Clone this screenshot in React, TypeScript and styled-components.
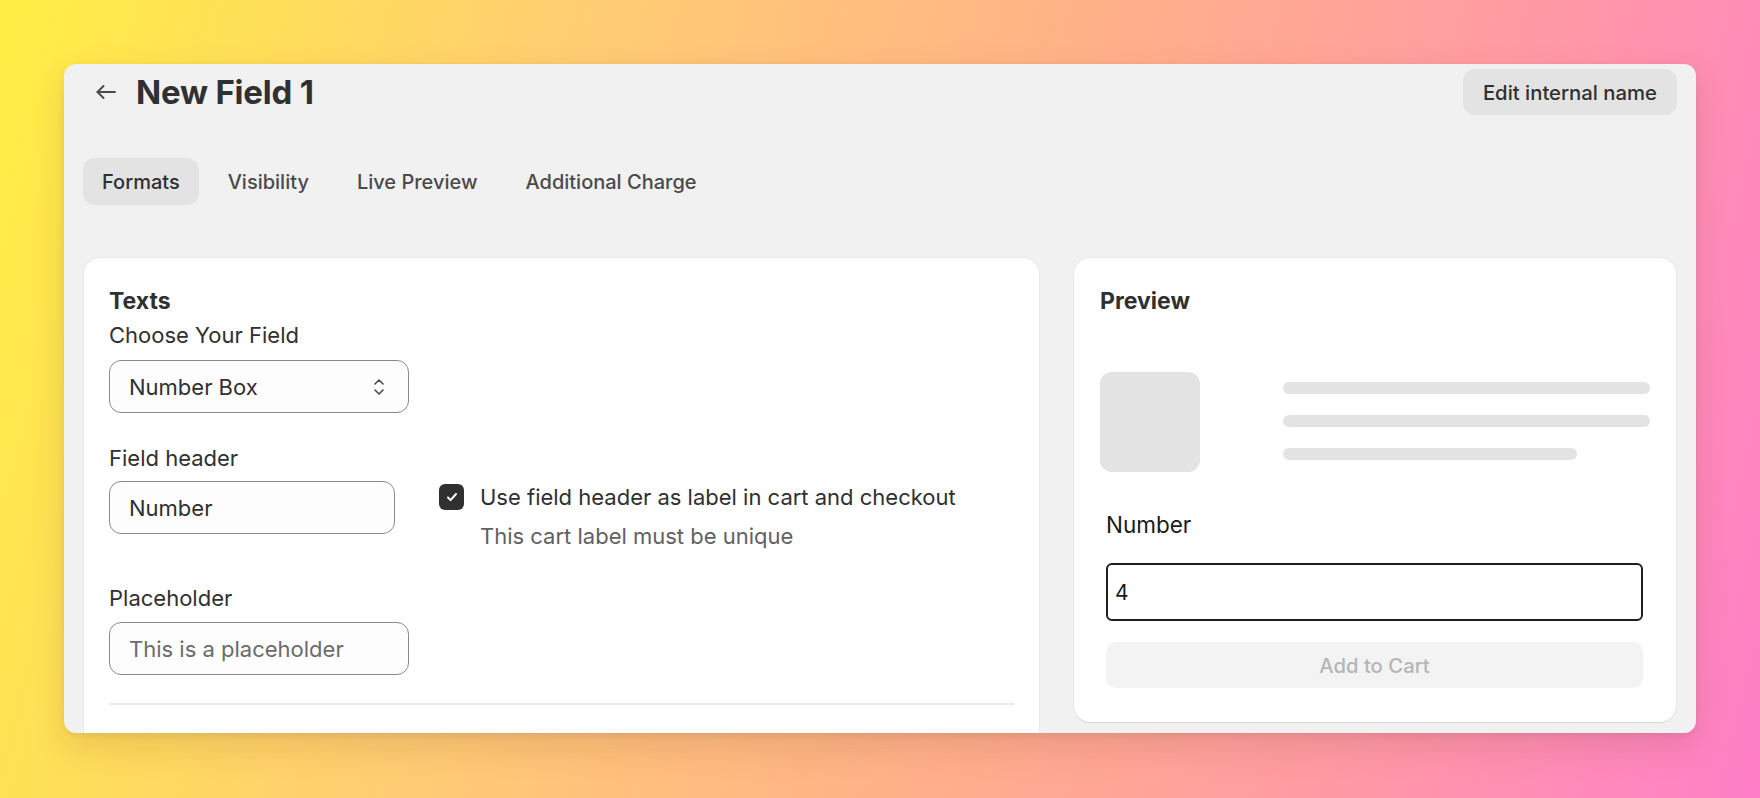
import React from 'react'
import styled, { createGlobalStyle } from 'styled-components'

const GlobalStyle = createGlobalStyle`
  * { box-sizing: border-box; }
  html, body {
    margin: 0;
    padding: 0;
  }
  body {
    font-family: Inter, "Noto Sans", "Liberation Sans", sans-serif;
    color: #303030;
    -webkit-font-smoothing: antialiased;
  }
`

const Backdrop = styled.div`
  width: 1760px;
  height: 798px;
  overflow: hidden;
  padding: 64px 0 0 64px;
  background: linear-gradient(105deg, #ffee44 0%, #ffcd72 30%, #ffb287 55%, #ff9aa4 78%, #ff7fc8 100%);
`

const Window = styled.div`
  width: 1632px;
  height: 669px;
  overflow: hidden;
  border-radius: 12px;
  background: #f1f1f1;
  padding: 5px 19px 0 20px;
  box-shadow: 0 14px 34px rgba(120, 60, 40, 0.16), 0 2px 6px rgba(0, 0, 0, 0.06);
`

const Header = styled.div`
  display: flex;
  align-items: center;
  justify-content: space-between;
  height: 46px;
`

const TitleGroup = styled.div`
  display: flex;
  align-items: center;
  gap: 18px;
  padding-left: 10px;
`

const BackButton = styled.button`
  display: flex;
  align-items: center;
  justify-content: center;
  width: 24px;
  height: 24px;
  padding: 0;
  border: 0;
  background: none;
  color: #4a4a4a;
`

const Title = styled.h1`
  margin: 0;
  font-size: 33px;
  line-height: 40px;
  font-weight: 700;
  letter-spacing: -0.2px;
  color: #303030;
`

const GhostButton = styled.button`
  height: 46px;
  padding: 0 20px;
  border: 0;
  border-radius: 12px;
  background: #e3e3e3;
  font-family: inherit;
  font-size: 20.3px;
  font-weight: 500;
  color: #303030;
`

const Tabs = styled.div`
  display: flex;
  gap: 10px;
  margin-top: 43px;
  margin-left: -1px;
`

const Tab = styled.button<{ $active?: boolean }>`
  height: 47px;
  padding: 0 19px;
  border: 0;
  border-radius: 12px;
  background: ${({ $active }) => ($active ? '#e3e3e3' : 'transparent')};
  font-family: inherit;
  font-size: 20px;
  font-weight: 500;
  color: ${({ $active }) => ($active ? '#303030' : '#4a4a4a')};
`

const Columns = styled.div`
  display: grid;
  grid-template-columns: 955px 602px;
  gap: 35px;
  align-items: start;
  margin-top: 53px;
`

const Card = styled.section<{ $pad: string }>`
  background: #ffffff;
  border-radius: 16px;
  padding: ${({ $pad }) => $pad};
  box-shadow: 0 1px 0 rgba(0, 0, 0, 0.07), 0 0 0 1px rgba(0, 0, 0, 0.035);
`

const CardTitle = styled.h2`
  margin: 0;
  font-size: 23px;
  line-height: 28px;
  font-weight: 700;
  color: #303030;
`

const Label = styled.div<{ $gap?: number }>`
  font-size: 22px;
  line-height: 26px;
  color: #303030;
  margin-bottom: ${({ $gap }) => $gap ?? 12}px;
`

const Field = styled.div<{ $top: number }>`
  margin-top: ${({ $top }) => $top}px;
`

const Box = styled.div<{ $width: number; $muted?: boolean }>`
  display: flex;
  align-items: center;
  justify-content: space-between;
  width: ${({ $width }) => $width}px;
  height: 53px;
  padding: 0 22px 0 19px;
  border: 1px solid #8a8a8a;
  border-radius: 12px;
  background: #fdfdfd;
  font-size: 22px;
  color: ${({ $muted }) => ($muted ? '#6b6b6b' : '#303030')};
`

const FieldRow = styled.div`
  display: flex;
  align-items: flex-start;
  gap: 44px;
`

const CheckRow = styled.div`
  display: flex;
  align-items: flex-start;
  gap: 16px;
  padding-top: 3px;
`

const CheckBox = styled.span`
  display: flex;
  align-items: center;
  justify-content: center;
  width: 25px;
  height: 26px;
  border-radius: 6px;
  background: #303030;
`

const CheckText = styled.div`
  display: flex;
  flex-direction: column;
  gap: 13px;
  font-size: 22px;
  line-height: 26px;
`

const Helper = styled.span`
  color: #616161;
`

const Divider = styled.hr`
  margin: 28px 0 0;
  border: 0;
  height: 2px;
  background: #ebebeb;
`

const ProductRow = styled.div`
  display: grid;
  grid-template-columns: 1fr 2fr;
  margin-top: 57px;
`

const Thumb = styled.div`
  width: 100px;
  height: 100px;
  border-radius: 12px;
  background: #e3e3e3;
`

const Lines = styled.div`
  display: flex;
  flex-direction: column;
  gap: 21px;
  padding-top: 10px;
`

const Line = styled.div<{ $width: string }>`
  width: ${({ $width }) => $width};
  height: 12px;
  border-radius: 6px;
  background: #e3e3e3;
`

const PreviewForm = styled.div`
  display: flex;
  flex-direction: column;
  padding: 0 7px 0 6px;
  margin-top: 39px;
`

const PreviewLabel = styled.div`
  font-size: 22.5px;
  line-height: 27px;
  color: #1a1a1a;
  margin-bottom: 25px;
`

const PreviewInput = styled.div`
  display: flex;
  align-items: center;
  height: 58px;
  padding: 0 7px;
  border: 2px solid #1f1f1f;
  border-radius: 6px;
  font-size: 21px;
  color: #1a1a1a;
`

const CartButton = styled.button`
  height: 46px;
  margin-top: 21px;
  border: 0;
  border-radius: 10px;
  background: #f3f3f3;
  font-family: inherit;
  font-size: 20.3px;
  font-weight: 500;
  color: #b5b5b5;
`

const ArrowLeft = () => (
  <svg width="24" height="24" viewBox="0 0 24 24" fill="none" stroke="currentColor" strokeWidth="2" strokeLinecap="round" strokeLinejoin="round">
    <path d="M21 12H3.5" />
    <path d="M9.5 6L3.5 12l6 6" />
  </svg>
)

const UpDown = () => (
  <svg width="14" height="22" viewBox="0 0 14 22" fill="none" stroke="#4a4a4a" strokeWidth="1.6" strokeLinecap="round" strokeLinejoin="round">
    <path d="M3 8l4-4 4 4" />
    <path d="M3 14l4 4 4-4" />
  </svg>
)

const Check = () => (
  <svg width="14" height="14" viewBox="0 0 14 14" fill="none" stroke="#ffffff" strokeWidth="2" strokeLinecap="round" strokeLinejoin="round">
    <path d="M3 7.5l2.6 2.6L11 4" />
  </svg>
)

const tabs = ['Formats', 'Visibility', 'Live Preview', 'Additional Charge']

const App = () => {
  return (
    <Backdrop>
      <GlobalStyle />
      <Window>
        <Header>
          <TitleGroup>
            <BackButton aria-label="Back">
              <ArrowLeft />
            </BackButton>
            <Title>New Field 1</Title>
          </TitleGroup>
          <GhostButton>Edit internal name</GhostButton>
        </Header>

        <Tabs>
          {tabs.map((tab, i) => (
            <Tab key={tab} $active={i === 0}>
              {tab}
            </Tab>
          ))}
        </Tabs>

        <Columns>
          <Card $pad="29px 25px 80px 25px">
            <CardTitle>Texts</CardTitle>
            <Field $top={7}>
              <Label>Choose Your Field</Label>
              <Box $width={300}>
                Number Box
                <UpDown />
              </Box>
            </Field>
            <Field $top={32}>
              <Label $gap={10}>Field header</Label>
              <FieldRow>
                <Box $width={286}>Number</Box>
                <CheckRow>
                  <CheckBox>
                    <Check />
                  </CheckBox>
                  <CheckText>
                    <span>Use field header as label in cart and checkout</span>
                    <Helper>This cart label must be unique</Helper>
                  </CheckText>
                </CheckRow>
              </FieldRow>
            </Field>
            <Field $top={36}>
              <Label $gap={11}>Placeholder</Label>
              <Box $width={300} $muted>
                This is a placeholder
              </Box>
            </Field>
            <Divider />
          </Card>

          <Card $pad="29px 26px 34px 26px">
            <CardTitle>Preview</CardTitle>
            <ProductRow>
              <Thumb />
              <Lines>
                <Line $width="100%" />
                <Line $width="100%" />
                <Line $width="80%" />
              </Lines>
            </ProductRow>
            <PreviewForm>
              <PreviewLabel>Number</PreviewLabel>
              <PreviewInput>4</PreviewInput>
              <CartButton>Add to Cart</CartButton>
            </PreviewForm>
          </Card>
        </Columns>
      </Window>
    </Backdrop>
  )
}

export default App
